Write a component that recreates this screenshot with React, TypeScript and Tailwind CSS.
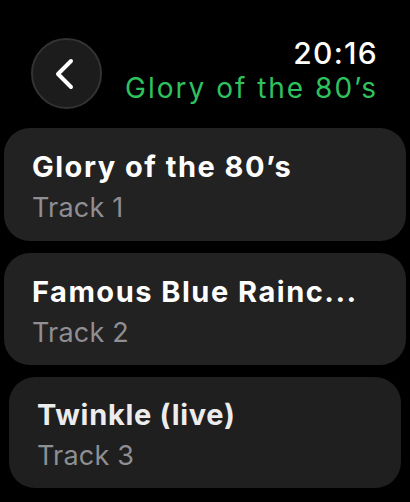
const tracks = [
  { title: "Glory of the 80’s", sub: "Track 1", h: "h-[113px]" },
  { title: "Famous Blue Rainc...", sub: "Track 2", h: "h-[112px]" },
];

function TrackCard({ title, sub, h, inset }: { title: string; sub: string; h?: string; inset?: boolean }) {
  return (
    <div
      className={
        inset
          ? "mx-[5px] h-[111px] rounded-[26px] bg-[#1f1f1f] px-[28px] pt-[21px]"
          : `${h} rounded-[26px] bg-[#222222] px-[28px] pt-[22px]`
      }
    >
      <div
        className={
          inset
            ? "text-[29px] leading-[34px] font-bold tracking-[0.7px] text-[#ececec]"
            : "text-[29px] leading-[34px] font-bold tracking-[1.5px] text-white"
        }
      >
        {title}
      </div>
      <div className="mt-[8px] text-[27px] leading-[32px] tracking-[0.2px] text-[#8e8e93]">{sub}</div>
    </div>
  );
}

export default function App() {
  return (
    <div
      className="w-[410px] h-[502px] overflow-hidden bg-black"
      style={{ fontFamily: "Inter, 'Noto Sans', sans-serif" }}
    >
      {/* Header */}
      <div className="flex justify-between pl-[31px] pr-[32px] pt-[38px]">
        <button className="flex h-[71px] w-[71px] items-center justify-center rounded-full border-2 border-[#333333] bg-[#1c1c1c]">
          <svg width="30" height="34" viewBox="0 0 30 34" fill="none">
            <path
              d="M19 4 L6 17 L19 30"
              stroke="white"
              strokeWidth="4"
              strokeLinecap="round"
              strokeLinejoin="round"
            />
          </svg>
        </button>
        <div className="flex flex-col items-end">
          <div className="text-[30px] leading-[36px] font-medium tracking-[1.3px] text-white -mt-[3px]">20:16</div>
          <div className="text-[28px] leading-[34px] tracking-[2px] text-[#30c15f]">Glory of the 80’s</div>
        </div>
      </div>

      {/* Track list */}
      <div className="mt-[19px] flex flex-col gap-[12px] px-[4px]">
        {tracks.map((t) => (
          <TrackCard key={t.sub} title={t.title} sub={t.sub} h={t.h} />
        ))}
        <TrackCard title="Twinkle (live)" sub="Track 3" inset />
      </div>
    </div>
  );
}
